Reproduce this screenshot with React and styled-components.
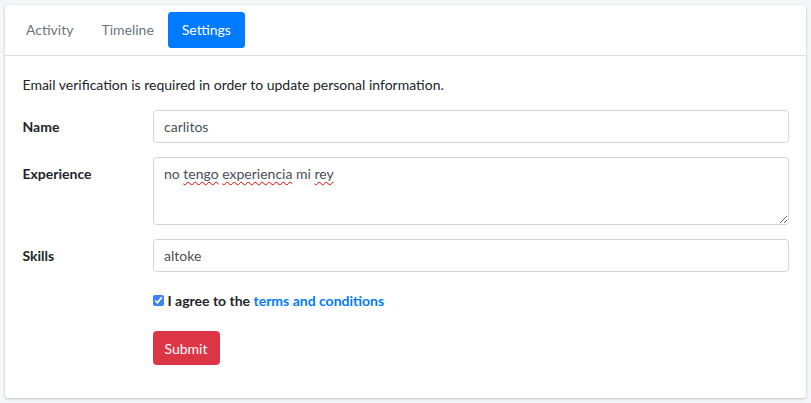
import React from "react";
import styled, { createGlobalStyle } from "styled-components";

const GlobalStyle = createGlobalStyle`
  html, body {
    margin: 0;
    padding: 0;
    background: #f4f6f9;
  }
  body {
    font-family: "Lato", "Noto Sans", sans-serif;
    font-size: 14px;
    line-height: 1.5;
    color: #212529;
  }
  * {
    box-sizing: border-box;
  }
`;

const Page = styled.div`
  padding: 5px;
`;

const Card = styled.div`
  background: #fff;
  border-radius: 3.5px;
  box-shadow: 0 0 1px rgba(0, 0, 0, 0.125), 0 1px 3px rgba(0, 0, 0, 0.2);
`;

const CardHeader = styled.div`
  padding: 7px;
  border-bottom: 1px solid rgba(0, 0, 0, 0.125);
`;

const Pills = styled.ul`
  display: flex;
  list-style: none;
  margin: 0;
  padding: 0;
`;

const Pill = styled.li`
  padding: 6px 14px;
  border-radius: 3.5px;
  line-height: 24px;
  color: ${(p) => (p.$active ? "#fff" : "#6c757d")};
  background: ${(p) => (p.$active ? "#007bff" : "transparent")};
  cursor: pointer;
`;

const CardBody = styled.div`
  padding: 17.5px 17.5px 18.5px;
`;

const Notice = styled.p`
  margin: 0 0 15px;
`;

const FormRow = styled.div`
  display: grid;
  grid-template-columns: 130px 1fr;
  margin-bottom: 14px;
`;

const Label = styled.label`
  font-weight: 700;
  padding-top: 6.25px;
`;

const Input = styled.input`
  display: block;
  width: 100%;
  height: 33.5px;
  padding: 5.25px 10.5px;
  font: inherit;
  color: #495057;
  background: #fff;
  border: 1px solid #ced4da;
  border-radius: 3.5px;
  outline: none;
`;

const TextArea = styled.div`
  height: 67.5px;
  padding: 5.25px 10.5px;
  color: #495057;
  border: 1px solid #ced4da;
  border-radius: 3.5px;
  resize: vertical;
  overflow: auto;
`;

const Typo = styled.span`
  text-decoration: underline wavy #e00;
  text-decoration-thickness: 1px;
  text-underline-offset: 2px;
`;

const CheckRow = styled.div`
  grid-column: 2;
  display: flex;
  align-items: center;
  gap: 4px;
  height: 31px;
  padding-bottom: 3px;
  font-weight: 700;
`;

const Check = styled.input`
  width: 11px;
  height: 11px;
  margin: 0;
  accent-color: #3b82f6;
`;

const Link = styled.a`
  color: #007bff;
  text-decoration: none;
`;

const SubmitButton = styled.button`
  grid-column: 2;
  justify-self: start;
  font: inherit;
  color: #fff;
  background: #dc3545;
  border: 1px solid #dc3545;
  border-radius: 3.5px;
  padding: 5.5px 11px;
  line-height: 21px;
`;

export default function App() {
  return (
    <>
      <GlobalStyle />
      <Page>
        <Card>
          <CardHeader>
            <Pills>
              <Pill>Activity</Pill>
              <Pill>Timeline</Pill>
              <Pill $active>Settings</Pill>
            </Pills>
          </CardHeader>
          <CardBody>
            <Notice>
              Email verification is required in order to update personal
              information.
            </Notice>
            <FormRow>
              <Label>Name</Label>
              <Input defaultValue="carlitos" />
            </FormRow>
            <FormRow>
              <Label>Experience</Label>
              <TextArea>
                no <Typo>tengo</Typo> <Typo>experiencia</Typo> mi{" "}
                <Typo>rey</Typo>
              </TextArea>
            </FormRow>
            <FormRow>
              <Label>Skills</Label>
              <Input defaultValue="altoke" />
            </FormRow>
            <FormRow>
              <CheckRow>
                <Check type="checkbox" defaultChecked />
                <span>
                  I agree to the <Link href="#">terms and conditions</Link>
                </span>
              </CheckRow>
            </FormRow>
            <FormRow>
              <SubmitButton type="button">Submit</SubmitButton>
            </FormRow>
          </CardBody>
        </Card>
      </Page>
    </>
  );
}
